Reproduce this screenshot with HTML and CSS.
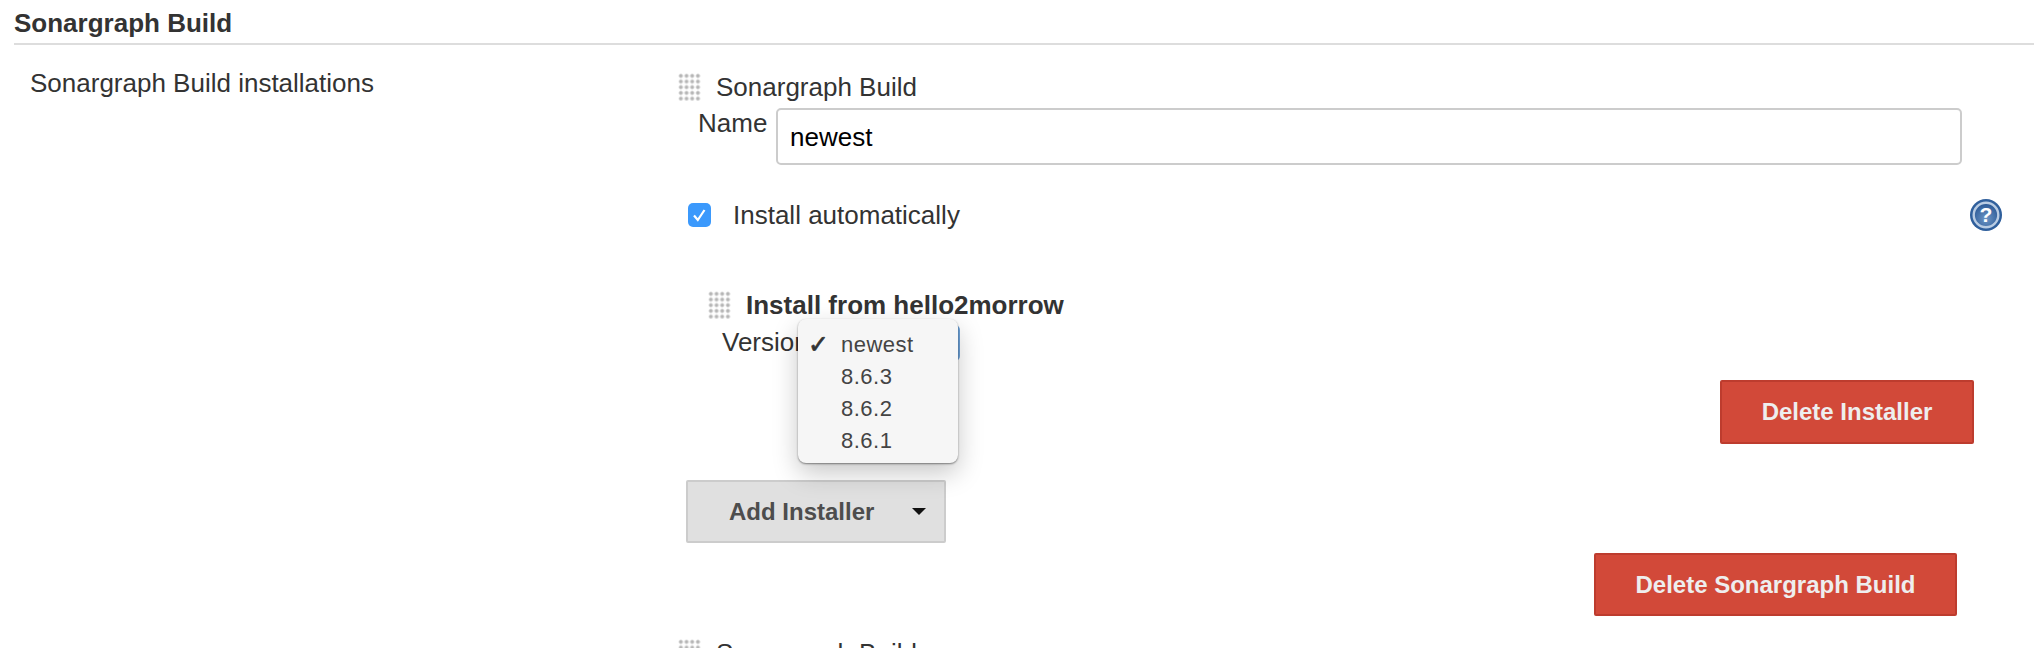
FILE: index.html
```html
<!DOCTYPE html>
<html lang="en">
<head>
<meta charset="utf-8">
<title>Sonargraph Build</title>
<link rel="stylesheet" href="styles.css">
</head>
<body>
<h2 class="section-title">Sonargraph Build</h2>
<div class="row">
  <div class="row-label">Sonargraph Build installations</div>
  <div class="row-body">
    <div class="item-head"><span class="grip"></span><span>Sonargraph Build</span></div>
    <div class="field">
      <label class="field-label" for="name">Name</label>
      <input class="text-input" id="name" type="text" value="newest">
    </div>
    <div class="check-row">
      <span class="checkbox"><svg width="23" height="24" viewBox="0 0 23 24"><path d="M6 12.5l3.8 4.5 6.7-10" fill="none" stroke="#fff" stroke-width="2.2"/></svg></span>
      <span class="check-label">Install automatically</span>
      <svg class="help" width="32" height="32" viewBox="0 0 32 32">
        <defs><radialGradient id="hg" cx="50%" cy="65%" r="70%"><stop offset="0" stop-color="#6f97c6"/><stop offset="1" stop-color="#1f4f8f"/></radialGradient></defs>
        <circle cx="16" cy="16" r="16" fill="#2f5f9c"/>
        <circle cx="16" cy="16" r="12.3" fill="url(#hg)" stroke="#b9cce3" stroke-width="2.4"/>
        <text x="16" y="23" text-anchor="middle" class="help-mark">?</text>
      </svg>
    </div>
    <div class="installer">
      <div class="item-head installer-head"><span class="grip"></span><strong>Install from hello2morrow</strong></div>
      <div class="version-row">
        <span class="version-label">Version</span>
        <span class="select-edge"></span>
        <ul class="menu">
          <li class="menu-item"><span class="tick">&#10003;</span>newest</li>
          <li class="menu-item">8.6.3</li>
          <li class="menu-item">8.6.2</li>
          <li class="menu-item">8.6.1</li>
        </ul>
      </div>
      <div class="right-row installer-actions"><button class="btn-danger btn-installer" type="button">Delete Installer</button></div>
    </div>
    <button class="btn-add" type="button">Add Installer<span class="caret"></span></button>
    <div class="right-row build-actions"><button class="btn-danger btn-build" type="button">Delete Sonargraph Build</button></div>
    <div class="item-head next-item"><span class="grip"></span><span>Sonargraph Build</span></div>
  </div>
</div>
</body>
</html>
```
FILE: styles.css
```css
html, body { margin: 0; height: 648px; overflow: hidden; background: #fff; }
body { font-family: "Liberation Sans", Arial, sans-serif; font-size: 26px; color: #333; }
.section-title { margin: 0 0 0 14px; height: 43px; line-height: 46px; font-size: 26px; font-weight: 700; border-bottom: 2px solid #ddd; }
.row { display: flex; padding-top: 28px; padding-left: 30px; }
.row-label { width: 648px; flex: none; line-height: 20px; }
.row-body { width: 1324px; flex: none; }
.item-head { display: flex; align-items: center; gap: 15px; height: 28px; line-height: 28px; }
.grip { flex: none; width: 23px; height: 28px; background: radial-gradient(circle, #b4b4b4 1.1px, rgba(205,205,205,.55) 2px, transparent 2.8px) 0 0 / 5.7px 5.7px; }
.field { display: flex; margin-top: 7px; margin-right: 40px; }
.field-label { width: 98px; padding-left: 20px; box-sizing: border-box; line-height: 30px; flex: none; }
.text-input { flex: 1; min-width: 0; height: 57px; box-sizing: border-box; border: 2px solid #ccc; border-radius: 5px; padding: 2px 12px 0; font: 26px "Liberation Sans", Arial, sans-serif; color: #000; background: #fff; outline: none; }
.check-row { display: flex; align-items: center; height: 32px; margin-top: 34px; padding-left: 10px; }
.checkbox { flex: none; width: 23px; height: 24px; border-radius: 5px; background: #3b99fc; display: flex; }
.check-label { margin-left: 22px; flex: 1; }
.help { flex: none; }
.help-mark { font: 700 21px "Liberation Sans", Arial, sans-serif; fill: #fff; }
.installer { margin-top: 60px; padding-left: 30px; }
.version-row { position: relative; height: 41px; padding-left: 14px; line-height: 46px; }
.select-edge { position: absolute; left: 220px; top: 6px; width: 32px; height: 36px; border-right: 2px solid #6ea3da; border-radius: 5px; box-sizing: border-box; }
.menu { position: absolute; left: 90px; top: 0; width: 160px; height: 144px; box-sizing: border-box; margin: 0; padding: 10px 0 0 43px; list-style: none; background: #f6f6f6; border-radius: 8px; box-shadow: 0 1px 2px rgba(0,0,0,.45), 0 10px 26px rgba(0,0,0,.22); font-size: 22px; letter-spacing: .5px; color: #444; }
.menu-item { position: relative; height: 32px; line-height: 32px; }
.tick { position: absolute; left: -33px; top: 1px; font: 700 25px "DejaVu Sans", sans-serif; -webkit-text-stroke: .7px #333; color: #333; letter-spacing: 0; }
.right-row { display: flex; justify-content: flex-end; }
.installer-actions { margin-top: 20px; margin-right: 28px; }
.build-actions { margin-top: 10px; margin-right: 45px; }
.btn-danger { height: 64px; box-sizing: border-box; border: 2px solid #bd3c2e; border-radius: 2px; background: #d24939; color: #eee; font: 700 24px "Liberation Sans", Arial, sans-serif; padding: 0; }
.btn-installer { width: 254px; }
.btn-build { width: 363px; height: 63px; }
.btn-add { display: flex; align-items: center; width: 260px; height: 63px; box-sizing: border-box; margin: 36px 0 0 8px; padding: 0 0 0 41px; border: 2px solid #ccc; border-radius: 2px; background: #e0e0e0; color: #4d4d4d; font: 700 24px "Liberation Sans", Arial, sans-serif; }
.caret { margin-left: 38px; width: 0; height: 0; border-left: 7px solid transparent; border-right: 7px solid transparent; border-top: 7px solid #111; }
.next-item { margin-top: 23px; }
```
